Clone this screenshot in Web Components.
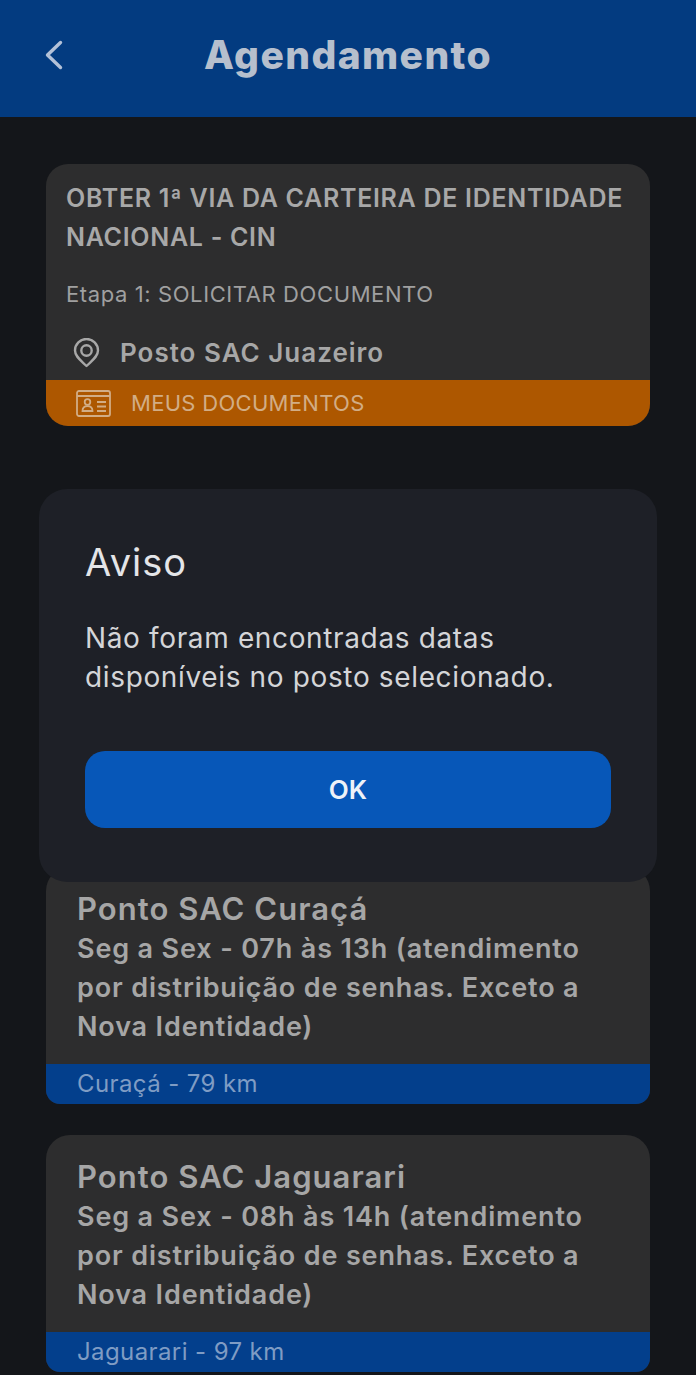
<!DOCTYPE html>
<html lang="pt-BR">
<head>
<meta charset="utf-8">
<title>Agendamento</title>
<style>
  html, body { margin: 0; padding: 0; background: #14161a; }
  body { width: 696px; height: 1375px; overflow: hidden; position: relative; font-family: Inter, "Liberation Sans", sans-serif; }
  .list { display: flex; flex-direction: column; gap: 31px; padding: 441px 46px 0; }
</style>
</head>
<body>
<app-header>Agendamento</app-header>
<service-card title-text="OBTER 1ª VIA DA CARTEIRA DE IDENTIDADE NACIONAL - CIN" step="Etapa 1: SOLICITAR DOCUMENTO" place="Posto SAC Juazeiro" action="MEUS DOCUMENTOS"></service-card>
<div class="list">
  <place-card name="Ponto SAC Curaçá" place="Curaçá - 79 km">Seg a Sex - 07h às 13h (atendimento por distribuição de senhas. Exceto a Nova Identidade)</place-card>
  <place-card name="Ponto SAC Jaguarari" place="Jaguarari - 97 km">Seg a Sex - 08h às 14h (atendimento por distribuição de senhas. Exceto a Nova Identidade)</place-card>
</div>
<alert-dialog heading="Aviso" button="OK">Não foram encontradas datas disponíveis no posto selecionado.</alert-dialog>

<script>
class AppHeader extends HTMLElement {
  connectedCallback() {
    this.attachShadow({ mode: 'open' });
    this.shadowRoot.innerHTML = `
      <style>
        :host { display: flex; align-items: center; justify-content: center; height: 117px; background: #033b80; position: relative; }
        h1 { margin: 0 0 7px; font: 800 39px/44px Inter, "Liberation Sans", sans-serif; color: #b6bfcd; letter-spacing: 1.4px; }
        svg { position: absolute; left: 44px; top: 40px; }
      </style>
      <svg width="20" height="30" viewBox="0 0 20 30" fill="none" stroke="#b3c1d8" stroke-width="3.4" stroke-linecap="round" stroke-linejoin="round"><path d="M16.5 2.5 3.5 15 16.5 27.5"/></svg>
      <h1><slot></slot></h1>
    `;
  }
}

class ServiceCard extends HTMLElement {
  connectedCallback() {
    this.attachShadow({ mode: 'open' });
    this.shadowRoot.innerHTML = `
      <style>
        :host { display: block; margin: 47px 46px 0; border-radius: 22px; overflow: hidden; background: #2d2d2e; color: #a7a7a7; font-family: Inter, "Liberation Sans", sans-serif; }
        .body { padding: 15px 20px 0; height: 216px; box-sizing: border-box; }
        h2 { margin: 0; font-size: 25px; line-height: 39px; font-weight: 600; color: #a8a8a8; letter-spacing: 0.7px; }
        p { margin: 22px 0 0; font-size: 22px; line-height: 30px; color: #a0a0a0; letter-spacing: 0.6px; }
        .place { display: flex; align-items: center; gap: 19px; margin: 24px 0 0 6px; font-size: 26px; line-height: 40px; font-weight: 600; letter-spacing: 1px; }
        .bar { display: flex; align-items: center; gap: 20px; height: 46px; padding: 0 30px; background: #ad5700; color: #d2ad85; font-size: 22px; letter-spacing: 0.3px; }
      </style>
      <div class="body">
        <h2>${this.getAttribute('title-text')}</h2>
        <p>${this.getAttribute('step')}</p>
        <div class="place">
          <svg width="29" height="30" viewBox="0 0 29 30" fill="none" stroke="#a7a7a7" stroke-width="2.4"><path d="M14.5 28C9 22.5 3 18.5 3 12.5a11.5 11.5 0 0 1 23 0C26 18.5 20 22.5 14.5 28Z" stroke-linejoin="round"/><circle cx="14.5" cy="12.5" r="5.2"/></svg>
          <span>${this.getAttribute('place')}</span>
        </div>
      </div>
      <div class="bar">
        <svg width="35" height="27" viewBox="0 0 35 27" fill="none" stroke="#d2ad85" stroke-width="1.8"><rect x="1" y="1" width="33" height="25" rx="2"/><path d="M1 6h33" stroke-width="2.2"/><circle cx="11.5" cy="12" r="2.8"/><path d="M6.500 21c0-3.500 2.200-4.800 5-4.800s5 1.300 5 4.800ZM21 12h9M21 16.500h9M21 21h9"/></svg>
        <span>${this.getAttribute('action')}</span>
      </div>
    `;
  }
}

class PlaceCard extends HTMLElement {
  connectedCallback() {
    this.attachShadow({ mode: 'open' });
    this.shadowRoot.innerHTML = `
      <style>
        :host { display: block; height: 237px; border-radius: 24px 24px 14px 14px; overflow: hidden; background: #2d2d2e; font-family: Inter, "Liberation Sans", sans-serif; }
        .body { height: 197px; box-sizing: border-box; padding: 21px 31px 0; color: #a6a6a6; }
        h3 { margin: 0; font-size: 31px; line-height: 41px; font-weight: 600; letter-spacing: 1.05px; }
        p { margin: 0; font-size: 27px; line-height: 39px; font-weight: 600; letter-spacing: 0.85px; }
        .bar { height: 40px; padding: 0 31px; background: #033f8c; color: #7f9cc4; font-size: 24px; line-height: 40px; letter-spacing: 0.4px; }
      </style>
      <div class="body">
        <h3>${this.getAttribute('name')}</h3>
        <p><slot></slot></p>
      </div>
      <div class="bar">${this.getAttribute('place')}</div>
    `;
  }
}

class AlertDialog extends HTMLElement {
  connectedCallback() {
    this.attachShadow({ mode: 'open' });
    this.shadowRoot.innerHTML = `
      <style>
        :host { display: block; position: absolute; left: 39px; top: 489px; width: 618px; height: 393px; box-sizing: border-box; padding: 51px 46px 0; border-radius: 28px; background: #1e2027; color: #e4e5e8; font-family: Inter, "Liberation Sans", sans-serif; }
        h2 { margin: 0; font-size: 38px; line-height: 44px; font-weight: 400; letter-spacing: 1px; }
        p { margin: 35px 0 0; font-size: 28px; line-height: 39px; color: #d4d5d8; letter-spacing: 0.64px; }
        button { display: block; width: 100%; height: 77px; margin-top: 54px; border: 0; border-radius: 20px; background: #0757b8; color: #eef2f8; font: 600 26px Inter, "Liberation Sans", sans-serif; }
      </style>
      <h2>${this.getAttribute('heading')}</h2>
      <p><slot></slot></p>
      <button>${this.getAttribute('button')}</button>
    `;
  }
}

customElements.define('app-header', AppHeader);
customElements.define('service-card', ServiceCard);
customElements.define('place-card', PlaceCard);
customElements.define('alert-dialog', AlertDialog);
</script>
</body>
</html>
